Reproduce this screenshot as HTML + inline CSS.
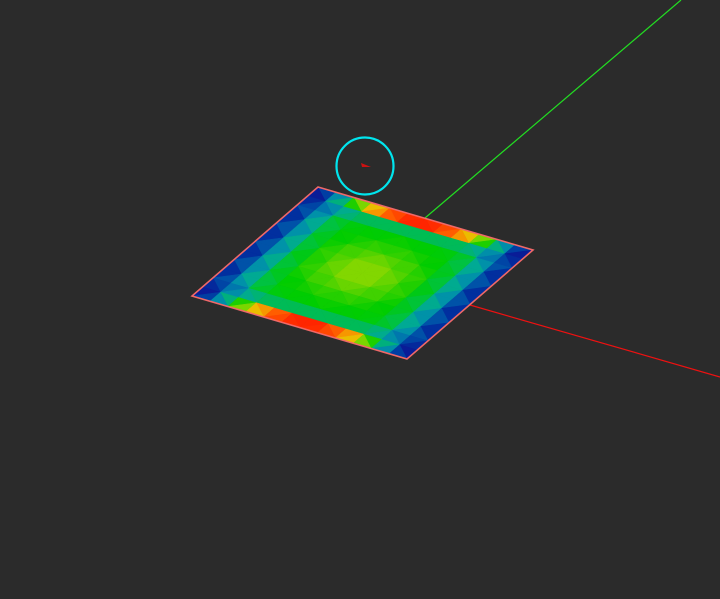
<!DOCTYPE html>
<html><head><meta charset="utf-8"><style>
html,body{margin:0;padding:0;background:#2b2b2b;width:720px;height:599px;overflow:hidden}
svg{display:block}
</style></head><body>
<svg id="s" width="720" height="599" viewBox="0 0 720 599">
<rect width="720" height="599" fill="#2b2b2b"/>
<line x1="425" y1="218" x2="681" y2="0" stroke="#22dd22" stroke-width="1.2"/>
<line x1="470" y1="305" x2="720" y2="377" stroke="#ee1111" stroke-width="1.2"/>
<g id="mesh"></g>
<polygon points="318,187 533,250 407,359 192,296" fill="none" stroke="#f06868" stroke-width="1.6"/>
<circle cx="365" cy="166" r="28.5" fill="none" stroke="#00e5ee" stroke-width="2.2"/>
<polygon points="361,163 371,167 362,167" fill="#cc1111"/>
</svg>
<script>
var T=[318,187],R=[533,250],L=[192,296];
function P(u,v){return [T[0]+u*(R[0]-T[0])+v*(L[0]-T[0]),T[1]+u*(R[1]-T[1])+v*(L[1]-T[1])];}
var stops=[[0,[20,0,140]],[0.12,[0,50,160]],[0.25,[0,110,175]],[0.35,[0,165,165]],[0.45,[0,195,60]],[0.52,[0,205,0]],[0.62,[130,215,0]],[0.72,[230,205,0]],[0.85,[255,120,0]],[1,[255,35,0]]];
function col(f){f=Math.max(0,Math.min(1,f));for(var i=1;i<stops.length;i++){if(f<=stops[i][0]){var a=stops[i-1],b=stops[i],t=(f-a[0])/(b[0]-a[0]);return 'rgb('+[0,1,2].map(function(k){return Math.round(a[1][k]+t*(b[1][k]-a[1][k]))}).join(',')+')';}}return 'rgb(255,35,0)';}
function F(u,v){
 var du=Math.min(u,1-u),dv=Math.min(v,1-v);
 if(dv<1/12){return Math.pow(Math.sin(Math.PI*u),1.1);}
 var s=Math.min(1,du/0.3);s=s*(2-s);
 var interior=0.5+0.13*Math.exp(-((u-.5)*(u-.5)+(v-.5)*(v-.5))/0.05);
 if(dv<2/12) interior-=0.08;
 return s*interior+(1-s)*0.03;
}
var N=12,h='';
for(var i=0;i<N;i++)for(var j=0;j<N;j++){
var u0=i/N,u1=(i+1)/N,v0=j/N,v1=(j+1)/N;
var a=P(u0,v0),b=P(u1,v0),c=P(u1,v1),d=P(u0,v1);
var tris=((i+j)%2==0)?[[a,b,c,[(u0+u1+u1)/3,(v0+v0+v1)/3]],[a,c,d,[(u0+u1+u0)/3,(v0+v1+v1)/3]]]:[[a,b,d,[(u0+u1+u0)/3,(v0+v0+v1)/3]],[b,c,d,[(u1+u1+u0)/3,(v0+v1+v1)/3]]];
tris.forEach(function(t){var f=F(t[3][0],t[3][1]);var cl=col(f);
h+='<polygon points="'+[t[0],t[1],t[2]].map(function(p){return p[0].toFixed(1)+','+p[1].toFixed(1)}).join(' ')+'" fill="'+cl+'" stroke="'+cl+'" stroke-width="0.5"/>';});
}
document.getElementById('mesh').innerHTML=h;
</script>
</body></html>
